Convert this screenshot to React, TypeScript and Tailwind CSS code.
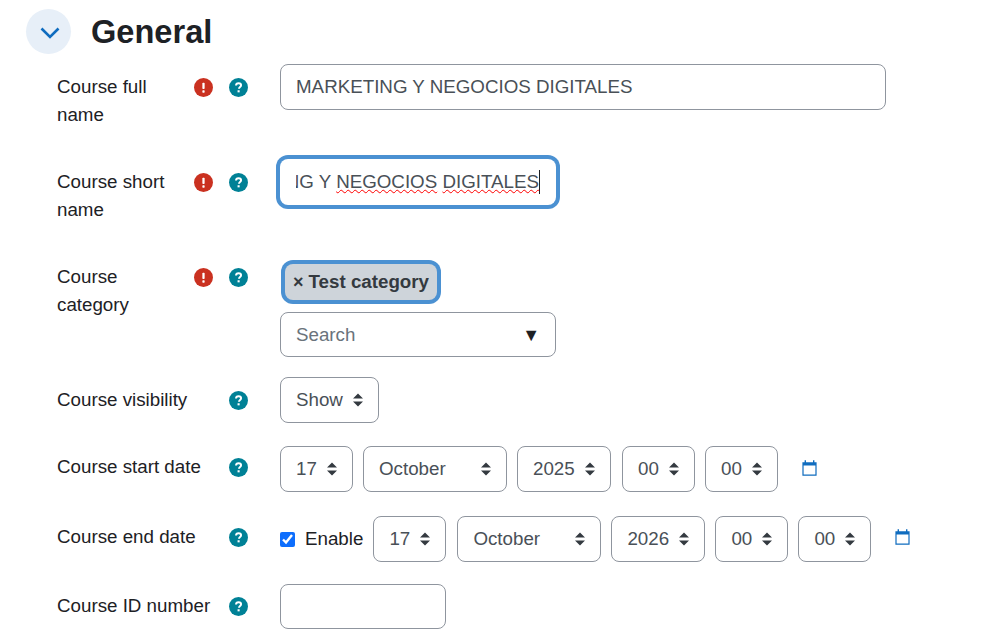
import React from "react";

function Err() {
  return (
    <svg width="19" height="19" viewBox="0 0 20 20" className="shrink-0">
      <circle cx="10" cy="10" r="10" fill="#ca3120" />
      <rect x="8.800" y="5" width="2.400" height="6.600" rx="0.8" fill="#fff" />
      <rect x="8.800" y="13" width="2.400" height="2.400" rx="0.6" fill="#fff" />
    </svg>
  );
}

function Help() {
  return (
    <svg width="19" height="19" viewBox="0 0 20 20" className="shrink-0">
      <circle cx="10" cy="10" r="10" fill="#008196" />
      <path d="M7.400 8c0-1.500 1.100-2.500 2.700-2.500 1.500 0 2.600.9 2.600 2.200 0 1-.5 1.500-1.300 2-.6.4-.8.7-.8 1.300v.2" fill="none" stroke="#fff" strokeWidth="2.100" />
      <rect x="9" y="12.900" width="2.200" height="2.200" fill="#fff" />
    </svg>
  );
}

function Arrows() {
  return (
    <svg width="10" height="14" viewBox="0 0 10 14" className="shrink-0">
      <path d="M5 .5 L10 5.500 H0 Z M5 13.500 L0 8.500 H10 Z" fill="#343a40" />
    </svg>
  );
}

function Calendar() {
  return (
    <svg width="15" height="16" viewBox="0 0 15 16" className="shrink-0">
      <path d="M2.600 0.300h1.400v2H11v-2h1.400v2H14.600v13.400H0.400V2.300H2.600z" fill="#0f6cbf" />
      <rect x="1.600" y="5.500" width="11.800" height="9" fill="#fff" />
    </svg>
  );
}

function Sel({ v, w, extra = "" }: { v: string; w: string; extra?: string }) {
  return (
    <div className={`${w} ${extra} h-[46px] shrink-0 flex items-center justify-between pl-[15px] pr-[15px] border border-[#8f959e] rounded-lg text-[#495057] bg-white`}>
      <span>{v}</span>
      <Arrows />
    </div>
  );
}

function Label({ lines, req, pt }: { lines: React.ReactNode; req?: boolean; pt: string }) {
  return (
    <div className={`w-[223px] shrink-0 flex ${pt}`}>
      <div className="w-[137px] shrink-0 leading-[28px] whitespace-nowrap text-[#1d2125]">{lines}</div>
      <div className="w-[19px] h-[28px] shrink-0 flex items-center">{req ? <Err /> : null}</div>
      <div className="ml-[16px] h-[28px] flex items-center"><Help /></div>
    </div>
  );
}

export default function App() {
  return (
    <div className="w-[997px] h-[637px] overflow-hidden bg-white pt-[9px] text-[18.75px] font-['Liberation_Sans',Arial,sans-serif]">
      <div className="flex items-center h-[45px] pl-[26px] mb-[10px]">
        <div className="w-[45px] h-[45px] rounded-full bg-[#e7eff8] flex items-center justify-center">
          <svg width="20" height="12" viewBox="0 0 20 12" className="mt-[3px] ml-[2px]">
            <path d="M1.500 1.500 L10 10 L18.500 1.500" fill="none" stroke="#0f6cbf" strokeWidth="2.600" />
          </svg>
        </div>
        <h3 className="ml-[20px] pt-[2px] text-[32.6px] leading-none font-bold text-[#1d2125]">General</h3>
      </div>

      <div className="pl-[57px]">
        <div className="flex mb-[30px] h-[65px]">
          <Label lines={<>Course full<br />name</>} req pt="pt-[9px]" />
          <input readOnly value="MARKETING Y NEGOCIOS DIGITALES" className="w-[606px] h-[46px] px-[15px] border border-[#8f959e] rounded-lg text-[#495057] outline-none" />
        </div>

        <div className="flex mb-[30px] h-[65px]">
          <Label lines={<>Course short<br />name</>} req pt="pt-[9px]" />
          <div className="w-[276px] h-[46px] px-[16px] rounded-lg shadow-[0_0_0_4px_#4b91d2] text-[#495057] flex items-center">
            <div className="flex-1 min-w-0 flex justify-end overflow-hidden whitespace-nowrap py-1">
              <span className="shrink-0 border-r border-[#1d2125] leading-[24px]">
                MARKETING Y{" "}
                <span className="underline decoration-wavy decoration-[#ff0000] decoration-[1.2px] underline-offset-[1px]">NEGOCIOS</span>{" "}
                <span className="underline decoration-wavy decoration-[#ff0000] decoration-[1.2px] underline-offset-[1px]">DIGITALES</span>
              </span>
            </div>
          </div>
        </div>

        <div className="flex mb-[20px]">
          <Label lines={<>Course<br />category</>} req pt="pt-[9px]" />
          <div className="w-[276px] pt-[10px]">
            <div className="ml-[5px] w-[152px] h-[36px] flex items-center px-[8px] rounded-lg bg-[#ced4da] shadow-[0_0_0_4px_#4b91d2] font-bold text-[#343a40] whitespace-nowrap">
              <span className="text-[18px] mr-[5px]">×</span>Test category
            </div>
            <div className="mt-[12px] h-[45px] flex items-center justify-between pl-[15px] pr-[15px] border border-[#8f959e] rounded-lg">
              <span className="text-[#6a737b] pt-[1px]">Search</span>
              <span className="text-[#1d2125] text-[18px] pt-[2px]">▼</span>
            </div>
          </div>
        </div>

        <div className="flex mb-[23px]">
          <Label lines="Course visibility" pt="pt-[9px]" />
          <Sel v="Show" w="w-[99px]" />
        </div>

        <div className="flex mb-[24px]">
          <Label lines="Course start date" pt="pt-[7px]" />
          <div className="flex items-center">
            <Sel v="17" w="w-[73px]" />
            <Sel v="October" w="w-[144px]" extra="ml-[10px]" />
            <Sel v="2025" w="w-[94px]" extra="ml-[10px]" />
            <Sel v="00" w="w-[73px]" extra="ml-[11px]" />
            <Sel v="00" w="w-[73px]" extra="ml-[10px]" />
            <div className="ml-[24px] -mt-[2px]"><Calendar /></div>
          </div>
        </div>

        <div className="flex mb-[22px]">
          <Label lines="Course end date" pt="pt-[7px]" />
          <div className="flex items-center">
            <input type="checkbox" readOnly checked className="w-[15px] h-[15px] accent-[#0d6efd] m-0" />
            <span className="ml-[10px] text-[#1d2125]">Enable</span>
            <Sel v="17" w="w-[73px]" extra="ml-[10px]" />
            <Sel v="October" w="w-[144px]" extra="ml-[11px]" />
            <Sel v="2026" w="w-[94px]" extra="ml-[10px]" />
            <Sel v="00" w="w-[73px]" extra="ml-[10px]" />
            <Sel v="00" w="w-[73px]" extra="ml-[10px]" />
            <div className="ml-[24px] -mt-[4px]"><Calendar /></div>
          </div>
        </div>

        <div className="flex">
          <Label lines="Course ID number" pt="pt-[8px]" />
          <input readOnly className="w-[166px] h-[45px] border border-[#8f959e] rounded-lg outline-none" />
        </div>
      </div>
    </div>
  );
}
